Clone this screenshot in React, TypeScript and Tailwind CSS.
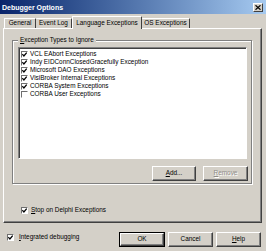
import React from "react";

const font = { fontFamily: '"Liberation Sans", Arial, sans-serif' };

function Check({ checked }: { checked: boolean }) {
  return (
    <div className="w-[7px] h-[7px] shrink-0 bg-white border border-t-[#6f6f6f] border-l-[#6f6f6f] border-b-white border-r-white shadow-[0_0_0_0_transparent] flex items-center justify-center">
      {checked && (
        <svg width="5" height="5" viewBox="0 0 5 5">
          <path d="M0.3 2.2 L1.9 3.9 L4.7 0.6" stroke="#000" strokeWidth="1.3" fill="none" />
        </svg>
      )}
    </div>
  );
}

function Btn({
  children,
  w,
  def,
  disabled,
}: {
  children: React.ReactNode;
  w: string;
  def?: boolean;
  disabled?: boolean;
}) {
  const inner = (
    <div
      className={`h-full w-full flex items-center justify-center bg-[#d4d0c8] border border-t-white border-l-white border-r-[#404040] border-b-[#404040] shadow-[inset_-1px_-1px_0_#808080] text-[6.4px] leading-none ${
        disabled ? "text-[#8f8d88] [text-shadow:1px_1px_0_#fff]" : "text-black"
      }`}
    >
      {children}
    </div>
  );
  return (
    <div className={`${w} h-[15px] ${def ? "border border-black" : ""}`}>{inner}</div>
  );
}

const items: [string, boolean][] = [
  ["VCL EAbort Exceptions", true],
  ["Indy EIDConnClosedGracefully Exception", true],
  ["Microsoft DAO Exceptions", true],
  ["VisiBroker Internal Exceptions", true],
  ["CORBA System Exceptions", true],
  ["CORBA User Exceptions", false],
];

export default function App() {
  return (
    <div className="w-[266px] h-[251px] bg-[#d4d0c8] overflow-hidden text-black" style={font}>
      {/* title bar */}
      <div className="h-[14px] flex items-center justify-between bg-gradient-to-r from-[#0a246a] to-[#a6caf0] pl-[2px] pr-[3px]">
        <span className="text-white font-bold text-[7px] leading-none">Debugger Options</span>
        <div className="w-[10px] h-[9px] bg-[#d4d0c8] border border-t-white border-l-white border-r-[#404040] border-b-[#404040] flex items-center justify-center">
          <svg width="6" height="5" viewBox="0 0 6 5">
            <path d="M0.5 0.3 L5.5 4.7 M5.5 0.3 L0.5 4.7" stroke="#000" strokeWidth="1.2" />
          </svg>
        </div>
      </div>

      {/* tabs */}
      <div className="h-[14px] flex items-end pl-[4px] text-[6.4px] leading-none">
        <div className="w-[32px] h-[10px] flex items-center justify-center border-t border-l border-t-white border-l-white border-r border-r-[#404040] rounded-t-[1px]">
          General
        </div>
        <div className="w-[36px] h-[10px] flex items-center justify-center border-t border-t-white border-r border-r-[#404040] rounded-t-[1px]">
          Event Log
        </div>
        <div className="relative z-10 w-[70px] h-[13px] -mb-[1px] flex items-start pt-[3px] justify-center bg-[#d4d0c8] border-t border-l border-t-white border-l-white border-r border-r-[#404040] rounded-t-[1px]">
          Language Exceptions
        </div>
        <div className="w-[48px] h-[10px] flex items-center justify-center border-t border-t-white border-r border-r-[#404040] rounded-t-[1px]">
          OS Exceptions
        </div>
      </div>

      {/* panel */}
      <div className="ml-[3px] w-[259px] h-[195px] border border-t-white border-l-white border-r-[#404040] border-b-[#404040] shadow-[inset_-1px_-1px_0_#808080] pt-[11px] pl-[8px]">
        {/* group box */}
        <div className="relative w-[240px] h-[144px] border border-[#808080] shadow-[inset_1px_1px_0_#fff,1px_1px_0_#fff] pt-[6px] pl-[5px]">
          <span className="absolute -top-[4px] left-[5px] bg-[#d4d0c8] px-[2px] text-[6.4px] leading-none">
            <span className="underline">E</span>xception Types to Ignore
          </span>
          <div className="w-[229px] h-[112px] bg-white border border-t-[#808080] border-l-[#808080] border-b-white border-r-white shadow-[inset_1px_1px_0_#404040] pt-[2px] pl-[2px] flex flex-col">
            {items.map(([t, c]) => (
              <div key={t} className="h-[8px] flex items-center gap-[2px] text-[6.4px] leading-none">
                <Check checked={c} />
                <span>{t}</span>
              </div>
            ))}
          </div>
          <div className="w-[230px] mt-[7px] flex justify-end gap-[7px]">
            <Btn w="w-[44px]">
              <span>
                <span className="underline">A</span>dd...
              </span>
            </Btn>
            <Btn w="w-[45px]" disabled>
              <span>
                <span className="underline">R</span>emove
              </span>
            </Btn>
          </div>
        </div>
        <div className="mt-[21px] ml-[9px] h-[10px] flex items-center gap-[3px] text-[6.4px] leading-none">
          <Check checked />
          <span>
            <span className="underline">S</span>top on Delphi Exceptions
          </span>
        </div>
      </div>

      {/* bottom */}
      <div className="h-[28px] flex items-center pl-[7px] pr-[5px] text-[6.4px] leading-none">
        <div className="flex items-center gap-[5px]">
          <Check checked />
          <span>
            <span className="underline">I</span>ntegrated debugging
          </span>
        </div>
        <div className="ml-auto flex gap-[3px] mt-[4px]">
          <Btn w="w-[46px]" def>
            OK
          </Btn>
          <Btn w="w-[45px]">Cancel</Btn>
          <Btn w="w-[45px]">
            <span>
              <span className="underline">H</span>elp
            </span>
          </Btn>
        </div>
      </div>
    </div>
  );
}
